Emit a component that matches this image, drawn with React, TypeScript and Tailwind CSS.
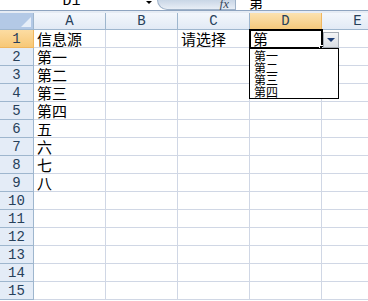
import React from 'react'

const cols = ['A', 'B', 'C', 'D', 'E']
const data: Record<number, string[]> = {
  1: ['信息源', '', '请选择', '第', ''],
  2: ['第一'],
  3: ['第二'],
  4: ['第三'],
  5: ['第四'],
  6: ['五'],
  7: ['六'],
  8: ['七'],
  9: ['八'],
}
const options = ['第一', '第二', '第三', '第四']

const cjk = { fontFamily: '"Noto Sans CJK SC", "Noto Sans", sans-serif' }
const mono = { fontFamily: '"Liberation Mono", "DejaVu Sans Mono", monospace' }

export default function App() {
  const rows = Array.from({ length: 15 }, (_, i) => i + 1)
  return (
    <div className="w-[368px] h-[301px] overflow-hidden bg-white select-none">
      {/* formula bar, cut off at the top */}
      <div className="h-[11px] flex border-b border-[#8ea4c0] overflow-hidden bg-white">
        <div className="w-[143px] flex justify-center">
          <span className="text-[15px] leading-[15px] -mt-[6px] text-black" style={mono}>D1</span>
        </div>
        <div className="w-[12px] flex justify-center">
          <div className="mt-[1px] w-0 h-0 border-l-[3px] border-r-[3px] border-t-[3px] border-l-transparent border-r-transparent border-t-black" />
        </div>
        <div className="w-[78px] ml-[2px] rounded-bl-[10px] bg-gradient-to-b from-[#c9d6e6] to-[#e8eef6] flex items-end justify-end pr-[6px] border-b border-l border-[#9fb2c8]">
          <span className="italic text-[13px] leading-[11px] text-[#3a4a5c] -mt-[4px]" style={{ fontFamily: '"Liberation Serif", serif' }}>fx</span>
        </div>
        <div className="w-px bg-[#9fb2c8]" />
        <div className="flex-1 pl-[13px]">
          <span className="block text-[14px] leading-[14px] -mt-[5px] text-black" style={cjk}>第</span>
        </div>
      </div>
      <div className="h-[2px] bg-[#e6ecf4]" />

      {/* column headers */}
      <div className="flex h-[17px]">
        <div className="w-[34px] shrink-0 relative bg-[#b3c9e6] border-r border-b border-[#9eb6ce] overflow-hidden">
          <svg className="absolute right-[2px] bottom-[2px]" width="10" height="10" viewBox="0 0 10 10">
            <polygon points="10,0 10,10 0,10" fill="#e6eef8" />
          </svg>
        </div>
        {cols.map((c) => (
          <div
            key={c}
            className={`w-[72px] shrink-0 flex items-center justify-center border-b border-r ${
              c === 'D'
                ? 'bg-gradient-to-b from-[#fbe2b0] to-[#f5c97c] border-[#f0b760]'
                : 'bg-gradient-to-b from-[#f3f7fc] to-[#e2eaf5] border-[#9eb6ce]'
            } text-[14px] leading-none text-[#27405a]`}
            style={mono}
          >
            {c}
          </div>
        ))}
      </div>

      {/* rows */}
      {rows.map((r) => (
        <div key={r} className="flex h-[18px]">
          <div
            className={`w-[34px] shrink-0 flex items-center justify-center border-r border-b text-[14px] leading-none text-[#27405a] ${
              r === 1
                ? 'bg-gradient-to-b from-[#fcdca2] to-[#f7c877] border-[#f0b760]'
                : 'bg-[#e4ecf7] border-[#9eb6ce]'
            }`}
            style={mono}
          >
            {r}
          </div>
          {cols.map((c, i) => (
            <div
              key={c}
              className="w-[72px] shrink-0 relative flex items-center pl-[3px] border-r border-b border-[#d0d7e5] text-[15px] leading-none text-black whitespace-nowrap"
              style={cjk}
            >
              {data[r]?.[i] ?? ''}
              {r === 1 && c === 'D' && (
                <>
                  <div className="absolute -left-px -top-px w-[74px] h-[20px] border-2 border-black pointer-events-none" />
                  <div className="absolute left-[69px] top-[15px] w-[5px] h-[5px] bg-black border border-white" />
                  <div className="absolute left-[73px] top-[2px] w-[16px] h-[16px] border border-[#a5acb5] bg-gradient-to-b from-[#f4f5f7] to-[#d9dde3] flex items-center justify-center z-10">
                    <div className="w-0 h-0 border-l-[4px] border-r-[4px] border-t-[4px] border-l-transparent border-r-transparent border-t-[#1e3f78]" />
                  </div>
                  <div className="absolute -left-px top-[18px] w-[90px] h-[51px] border border-black bg-white z-20 pl-[4px] pt-[1px]">
                    {options.map((o) => (
                      <div key={o} className="h-[12px] text-[12px] leading-[12px] overflow-hidden">{o}</div>
                    ))}
                  </div>
                </>
              )}
            </div>
          ))}
        </div>
      ))}
    </div>
  )
}
